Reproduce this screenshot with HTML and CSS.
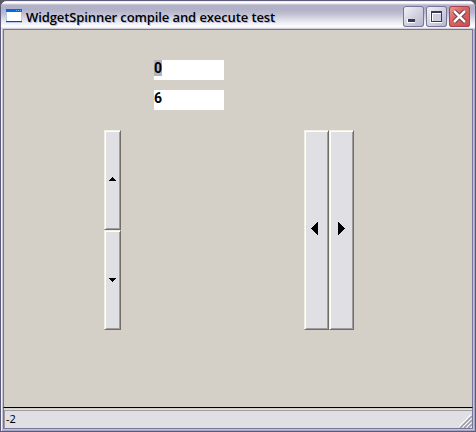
FILE: index.html
```html
<!DOCTYPE html>
<html lang="en">
<head>
<meta charset="utf-8">
<title>WidgetSpinner compile and execute test</title>
<link rel="stylesheet" href="styles.css">
</head>
<body>
<div class="window">
  <header class="titlebar">
    <svg class="app-icon" width="16" height="14" shape-rendering="crispEdges"><path fill="#b5c9ea" d="M0 0h16v14H0z"/><path fill="#fff" d="M1 3h14v9H1z"/><path fill="#0869d8" d="M0 0h16v3H0z"/><path fill="#60b0f8" d="M10 1h1v1h-1zM12 1h1v1h-1zM14 1h1v1h-1z"/><path fill="#28456f" d="M0 12h16v1H0z"/></svg>
    <h1 class="title"><span>WidgetSpinner compile and execute test</span></h1>
    <div class="controls">
      <button class="control" aria-label="Minimize"><svg width="21" height="21" shape-rendering="crispEdges"><path fill="#fff" d="M4 13h8v4H4z"/><path fill="#393953" d="M5 13h7v3H5z"/></svg></button>
      <button class="control" aria-label="Maximize"><svg width="21" height="21" shape-rendering="crispEdges"><path fill="none" stroke="#fff" d="M4.500 5v11.500h11"/><path fill="#393953" d="M5 5h11v11H5z"/><path fill="#fff" d="M6 7h9v8H6z"/><path fill="#cdcddd" d="M7 8h8v7H7z"/></svg></button>
      <button class="control close" aria-label="Close"><svg width="21" height="21"><path fill="none" stroke="#6d2c3c" stroke-width="4.500" d="M5 5l11 11M16 5L5 16"/><path fill="none" stroke="#fff" stroke-width="2.500" d="M5 5l11 11M16 5L5 16"/></svg></button>
    </div>
  </header>
  <main class="client">
    <div class="fields">
      <div class="field"><span class="selected">0</span></div>
      <div class="field">6</div>
    </div>
    <div class="spinners">
      <div class="spinner vertical">
        <button class="step" aria-label="Increase"><svg width="7" height="4" shape-rendering="crispEdges"><path d="M3 0h1v1h1v1h1v1h1v1H0V3h1V2h1V1h1z"/></svg></button>
        <button class="step" aria-label="Decrease"><svg width="7" height="4" shape-rendering="crispEdges"><path d="M0 0h7v1H6v1H5v1H4v1H3V3H2V2H1V1H0z"/></svg></button>
      </div>
      <div class="spinner horizontal">
        <button class="step" aria-label="Previous"><svg width="7" height="13" shape-rendering="crispEdges"><path d="M7 0v13H6v-1H5v-1H4v-1H3V9H2V8H1V7H0V6h1V5h1V4h1V3h1V2h1V1h1V0z"/></svg></button>
        <button class="step" aria-label="Next"><svg width="7" height="13" shape-rendering="crispEdges"><path d="M0 0v13h1v-1h1v-1h1v-1h1V9h1V8h1V7h1V6H6V5H5V4H4V3H3V2H2V1H1V0z"/></svg></button>
      </div>
    </div>
  </main>
  <footer class="statusbar">
    <span>-2</span>
    <svg class="grip" width="13" height="13"><path stroke="#fff" stroke-width="1.200" d="M0 12L12 0M4 12l8-8M8 12l4-4"/><path stroke="#9d9da7" stroke-width="1.700" d="M1 13L13 1M5 13l8-8M9 13l4-4"/></svg>
  </footer>
</div>
</body>
</html>
```
FILE: styles.css
```css
* { box-sizing: border-box; }
body { margin: 0; background: #5a5a60; }
.window {
  width: 476px;
  height: 432px;
  display: flex;
  flex-direction: column;
  border: 1px solid #5c5b7b;
  border-radius: 7px 7px 0 0;
  background: #c3c3d4;
  box-shadow: inset 1px 0 #f3f3fa, inset -1px -1px #a5a4be;
  padding: 0 2px 2px;
  overflow: hidden;
}
.titlebar {
  height: 28px;
  flex: none;
  display: flex;
  margin: 0 -2px;
  padding: 0 5px 0 5px;
  background: linear-gradient(#d8d8e5 0, #fff 1px, #fff 2px, #b3b3c9 4px, #b0b0c7 8px, #c0c0d2 13px, #e0e0ea 19px, #fcfcfe 25px, #fff 26px, #c4c4d4 28px);
}
.app-icon { margin-top: 8px; flex: none; }
.title {
  flex: 1;
  margin: 6px 0 0 4px;
  font: 600 13px/20px "Open Sans", sans-serif;
  color: #000;
  white-space: nowrap;
  letter-spacing: -0.1px;
  text-shadow: 1px 1px #b7b9d2;
}
.controls { display: flex; gap: 2px; margin-top: 5px; }
.control {
  width: 21px;
  height: 21px;
  padding: 0;
  border: 0;
  border-radius: 3px;
  box-shadow: inset 0 0 0 1px #74779a;
  background: linear-gradient(135deg, #f5f5fa, #d6d6e3 45%, #b4b4cb);
}
.control svg { display: block; }
.close {
  background: linear-gradient(135deg, #f0a09c, #dc6664 40%, #c94b4b);
  box-shadow: inset 0 0 0 1px #a14550;
}
.client {
  flex: 1;
  background: #d4d0c8;
  border: 1px solid #77769a;
  border-bottom: 1px solid #000;
  padding: 30px 0 0 100px;
}
.fields { margin-left: 50px; display: flex; flex-direction: column; gap: 10px; }
.field {
  width: 70px;
  height: 20px;
  background: #fff;
  font: bold 14px/17px Roboto, "Liberation Sans", sans-serif;
  color: #000;
}
.selected { display: block; width: 8px; height: 16px; background: #b2b4bf; }
.spinners { display: flex; gap: 183px; margin-top: 20px; }
.spinner { display: flex; height: 200px; }
.vertical { flex-direction: column; width: 17px; }
.horizontal { width: 50px; }
.step {
  flex: 1;
  display: flex;
  align-items: center;
  justify-content: center;
  padding: 0;
  border: 1px solid;
  border-color: #f1efe2 #716f64 #716f64 #f1efe2;
  background: #e0dfe3;
  box-shadow: inset 1px 1px #fff, inset -1px -1px #9d9da1;
}
.step svg { display: block; }
.vertical .step svg { margin-top: -2px; }
.vertical .step + .step svg { margin-top: 0; }
.horizontal .step svg { margin: 0 4px 3px 0; }
.horizontal .step + .step svg { margin: 0 1px 3px 0; }
.statusbar {
  height: 21px;
  flex: none;
  display: flex;
  justify-content: space-between;
  align-items: flex-end;
  border: 1px solid #77769a;
  border-top: 0;
  background: #e0dfe3;
  box-shadow: inset 0 1px #d4d0c8, inset 0 2px #e0dfe3, inset 1px 3px #9d9da1;
  padding-left: 2px;
  font: 11px/19px "Noto Sans", "Liberation Sans", sans-serif;
  color: #000;
}
.grip { display: block; }
```
